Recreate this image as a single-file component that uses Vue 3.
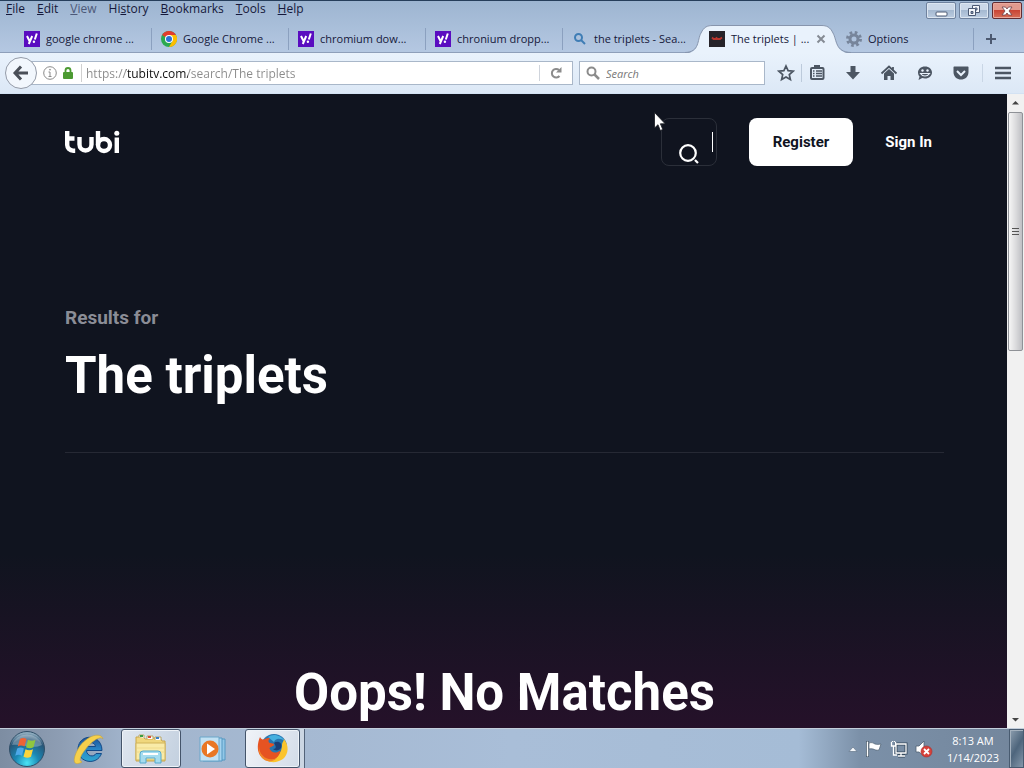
<template>
    <div class="desktop">
        <!-- Browser chrome -->
        <header class="browser">
            <div class="title-row">
                <nav class="menubar" aria-label="Menu">
                    <button v-for="item in menus" :key="item.join('')" class="menu-btn" :class="{ dim: item[1] === 'V' }">{{ item[0] }}<u>{{ item[1] }}</u>{{ item[2] }}</button>
                </nav>
                <div class="window-controls">
                    <button class="win-btn" aria-label="Minimize">
                        <svg width="28" height="16" viewBox="1 0 28 16"><rect x="10" y="9" width="11" height="4" rx="1" fill="#fff" stroke="#4c5a74" /></svg>
                    </button>
                    <button class="win-btn" aria-label="Restore">
                        <svg width="28" height="16" viewBox="1 0 28 16" fill="#f4f7fb" stroke="#4c5a74"><path d="M13.500 2.500h7v7h-7z" /><path d="M16 5h2v2h-2z" fill="#8ea3bf" /><path d="M9.500 5.500h7v7h-7z" /><path d="M12 8.500h2v2h-2z" fill="#8ea3bf" /></svg>
                    </button>
                    <button class="win-btn close" aria-label="Close">
                        <svg width="28" height="16" viewBox="1 0 28 16"><path d="M10 4h3.500L15 6l1.500-2H20l-3 4 3 4h-3.500L15 10l-1.500 2H10l3-4z" fill="#fff" stroke="#6c3f48" stroke-width=".8" /></svg>
                    </button>
                </div>
            </div>

            <div class="tabs" role="tablist">
                <div v-for="tab in tabs" :key="tab.title" class="tab" :class="{ active: tab.active, plain: tab.plain }">
                    <svg v-if="tab.active" class="tab-shape" viewBox="0 0 166 29" preserveAspectRatio="none">
                        <path d="M0 28.500C15 28 12 15 16 8C19 2 22 .5 28 .5H136C142 .5 145 2 148 8C152 15 150 28 166 28.500V29H0z" fill="#e9f2fc" />
                        <path d="M0 27.500C15 27 12 15 16 8C19 2 22 .5 28 .5H136C142 .5 145 2 148 8C152 15 150 27 166 27.500" fill="none" stroke="#8795ad" />
                    </svg>
                    <button class="tab-btn" role="tab" :aria-selected="!!tab.active">
                        <svg v-if="tab.icon === 'yahoo'" width="16" height="16" viewBox="0 0 16 16">
                            <rect width="16" height="16" fill="#5a0cc0" />
                            <path d="M3 5l2.500 5M8.200 5l-3.400 8" stroke="#fff" stroke-width="2" />
                            <path d="M12.800 2.500L10.800 8.500" stroke="#fff" stroke-width="2" />
                            <circle cx="9.900" cy="10.700" r="1.200" fill="#fff" />
                        </svg>
                        <svg v-else-if="tab.icon === 'chrome'" width="16" height="16" viewBox="0 0 16 16">
                            <circle cx="8" cy="8" r="8" fill="#2da94f" />
                            <path d="M8 8L1.100 4A8 8 0 0 1 15 4z" fill="#e33b2e" />
                            <path d="M8 4h7A8 8 0 0 1 8 16l3.500-6z" fill="#fdbd00" />
                            <circle cx="8" cy="8" r="4" fill="#fff" />
                            <circle cx="8" cy="8" r="3" fill="#2a72d8" />
                        </svg>
                        <svg v-else-if="tab.icon === 'search'" width="16" height="16" viewBox="0 0 16 16" fill="none" stroke="#3f7db5" stroke-width="2">
                            <circle cx="6.500" cy="6.500" r="3.500" /><path d="M9 9l4 4" />
                        </svg>
                        <svg v-else-if="tab.icon === 'tubi'" width="16" height="16" viewBox="0 0 16 16">
                            <rect width="16" height="16" fill="#262329" />
                            <path d="M3 6.500l1.500 1.500h2l1-1 1 1h2.500l2-1.500" fill="none" stroke="#b8342c" stroke-width="1.800" />
                        </svg>
                        <svg v-else width="16" height="16" viewBox="0 0 16 16" fill="none" stroke="#77859b">
                            <circle cx="8" cy="8" r="6.500" stroke-width="3" stroke-dasharray="2.600 2.500" />
                            <circle cx="8" cy="8" r="4" stroke-width="3" />
                        </svg>
                        <span>{{ tab.title }}</span>
                    </button>
                    <button v-if="tab.active" class="tab-close" aria-label="Close tab">
                        <svg width="10" height="10" viewBox="0 0 10 10"><path d="M1.500 1.500l7 7M8.500 1.500l-7 7" stroke="#858b94" stroke-width="2" /></svg>
                    </button>
                </div>
                <button class="new-tab" aria-label="New tab">
                    <svg width="10" height="10" viewBox="0 0 10 10"><path d="M5 0v10M0 5h10" stroke="#4c5970" stroke-width="2" /></svg>
                </button>
            </div>

            <div class="toolbar">
                <button class="back" aria-label="Back">
                    <svg width="18" height="16" viewBox="0 0 18 16" fill="none" stroke="#4a4f58" stroke-width="3"><path d="M9 1.500L3 8l6 6.500M3 8h13" /></svg>
                </button>
                <div class="url-box">
                    <svg width="14" height="14" viewBox="0 0 14 14" fill="none" stroke="#8a8a8a">
                        <circle cx="7" cy="7" r="6.300" /><path d="M7 6v4.500M5.500 6H7M5.500 10.500h3" /><circle cx="7" cy="3.700" r=".5" />
                    </svg>
                    <svg class="lock" width="10" height="12" viewBox="0 0 10 12"><path d="M2.500 6V3.500a2.500 2.500 0 0 1 5 0V6" fill="none" stroke="#4c9a32" stroke-width="1.800" /><rect y="5" width="10" height="7" rx="1" fill="#4c9a32" /></svg>
                    <input v-model="url" class="url" type="text" aria-label="Address">
                    <button class="reload" aria-label="Reload">
                        <svg width="12" height="12" viewBox="0 0 12 12"><path d="M9.500 9A4.300 4.300 0 1 1 9 3" fill="none" stroke="#8b8b8b" stroke-width="2" /><path d="M11.500 0v5.500H6z" fill="#8b8b8b" /></svg>
                    </button>
                </div>
                <label class="search-box">
                    <svg width="14" height="14" viewBox="0 0 14 14" fill="none" stroke="#8b8b8b"><circle cx="5.500" cy="5.500" r="4" stroke-width="2" /><path d="M8.500 8.500l4.500 4.500" stroke-width="2.500" /></svg>
                    <input type="text" placeholder="Search" aria-label="Search">
                </label>
                <div class="tools">
                    <button class="tool star" aria-label="Bookmark">
                        <svg width="18" height="18" viewBox="0 0 18 18"><path d="M9 2l2.100 4.700 5 .5-3.800 3.400 1.100 5L9 13l-4.400 2.600 1.100-5L1.900 7.200l5-.5z" fill="none" stroke="#4c5663" stroke-width="1.700" /></svg>
                    </button>
                    <button class="tool" aria-label="Bookmarks list">
                        <svg width="18" height="18" viewBox="0 0 18 18" fill="none" stroke="#4c5663"><rect x="3" y="4" width="12.500" height="11" rx="1" stroke-width="2" /><path d="M7 3.500V2h4v1.500" stroke-width="2" /><path d="M5 7h1.500M8 7h6M5 9.500h1.500M8 9.500h6M5 12h1.500M8 12h6" stroke-width="1.400" /></svg>
                    </button>
                    <button class="tool" aria-label="Downloads">
                        <svg width="18" height="18" viewBox="0 0 18 18" fill="#4c5663"><path d="M6.500 2h5v6H16l-7 7.500L2 8h4.500z" /></svg>
                    </button>
                    <button class="tool" aria-label="Home">
                        <svg width="18" height="18" viewBox="0 0 18 18"><path d="M1.500 9.500L9 2.500l7.500 7M13 3v3" fill="none" stroke="#4c5663" stroke-width="1.800" /><path d="M4 9.500L9 5l5 4.500V16h-3.500v-4h-3v4H4z" fill="#4c5663" /></svg>
                    </button>
                    <button class="tool" aria-label="Chat">
                        <svg width="18" height="18" viewBox="0 0 18 18"><path d="M9 2.500c4.200 0 7 2.700 7 6s-2.800 6-7 6c-1 0-2-.1-2.800-.4L2.500 16l1-3.500C2.500 11.500 2 10 2 8.500c0-3.300 2.800-6 7-6z" fill="#4c5663" /><circle cx="6.500" cy="6.500" r="1.200" fill="#e9f2fc" /><circle cx="11.500" cy="6.500" r="1.200" fill="#e9f2fc" /><path d="M4.500 9.500c2 3.300 7 3.300 9 0z" fill="none" stroke="#e9f2fc" stroke-width="1.200" /></svg>
                    </button>
                    <button class="tool" aria-label="Pocket">
                        <svg width="18" height="18" viewBox="0 0 18 18"><path d="M2.500 2.500h13c.6 0 1 .4 1 1V8c0 10-15 10-15 0V3.500c0-.6.4-1 1-1z" fill="#4c5663" /><path d="M5 7l4 4 4-4" fill="none" stroke="#e9f2fc" stroke-width="2" /></svg>
                    </button>
                    <button class="tool menu" aria-label="Open menu">
                        <svg width="18" height="18" viewBox="0 0 18 18"><path d="M1 4h16M1 9h16M1 14h16" stroke="#4c5663" stroke-width="2.600" /></svg>
                    </button>
                </div>
            </div>
        </header>

        <!-- Page and its scrollbar -->
        <div class="viewport">
            <main class="page">
                <div class="site-bar">
                    <a href="#" class="logo" aria-label="tubi">
                        <svg width="56" height="26" viewBox="1 0 56 26" fill="none" stroke="#fff" stroke-width="4.400">
                            <path d="M3.200 2v13.500a6 6 0 0 0 6 6.200h2M3 9.500h7.500" />
                            <path d="M15.500 8v7.500a6 6 0 0 0 12 0V8" />
                            <path d="M34 2v14" />
                            <circle cx="40" cy="16" r="6" />
                            <path d="M52.800 8.500v15.500" /><circle cx="52.800" cy="4.200" r="2.500" fill="#fff" stroke="none" />
                        </svg>
                    </a>
                    <label class="site-search">
                        <input type="text" aria-label="Search titles">
                        <svg width="22" height="22" viewBox="0 0 22 22" fill="none" stroke="#fff" stroke-width="2.200"><circle cx="10" cy="10" r="7.800" /><path d="M17 17l3 3" /></svg>
                        <span class="caret"></span>
                    </label>
                    <button class="register">Register</button>
                    <a href="#" class="sign-in">Sign In</a>
                </div>
                <section class="results">
                    <p>Results for</p>
                    <h1>The triplets</h1>
                </section>
                <h2 class="no-match">Oops! No Matches</h2>
            </main>
            <div class="scrollbar" aria-hidden="true">
                <svg width="17" height="17" viewBox="0 0 17 17"><path d="M5 10.500L8.500 7l3.500 3.500z" fill="#444" /></svg>
                <div class="track">
                    <div class="thumb"><i></i><i></i><i></i></div>
                </div>
                <svg width="17" height="17" viewBox="0 0 17 17"><path d="M5 7l3.500 3.500L12 7z" fill="#444" /></svg>
            </div>
        </div>

        <!-- Windows taskbar -->
        <footer class="taskbar">
            <button class="start" aria-label="Start">
                <svg width="38" height="38" viewBox="0 0 38 38">
                    <defs>
                        <radialGradient id="orb" cx=".5" cy=".9" r=".85"><stop offset="0" stop-color="#4be4f5" /><stop offset=".4" stop-color="#1a88b4" /><stop offset=".8" stop-color="#285577" /><stop offset="1" stop-color="#8caabd" /></radialGradient>
                    </defs>
                    <circle cx="19" cy="19" r="17.500" fill="url(#orb)" stroke="#304f68" />
                    <path d="M4 15a15.500 14 0 0 1 30 0c-10 5-20-2-30 0z" fill="#fff" opacity=".28" />
                    <path d="M12 9c2-1.500 4.500-1.300 6.500 0l-2 7.500c-2-1.200-4.500-1.400-6.800 0z" fill="#ee6335" />
                    <path d="M20 9.700c2.500 1.300 5 1.300 7.500 0l-2 7.600c-2.500 1.200-5 1.100-7.500-.1z" fill="#8fc63f" />
                    <path d="M9.200 18.500c2.300-1.400 4.700-1.200 6.700 0l-2 7.300c-2-1.200-4.500-1.300-6.700 0z" fill="#4da8e8" />
                    <path d="M17.500 19.200c2.500 1.300 5 1.200 7.500 0l-2 7.600c-2.500 1.200-5 1.100-7.500-.1z" fill="#fcd53b" />
                </svg>
            </button>
            <button class="task ie" aria-label="Internet Explorer">
                <svg width="34" height="34" viewBox="0 0 34 34" fill="none">
                    <defs>
                        <linearGradient id="ie" x2="0" y2="1"><stop offset="0" stop-color="#1c4f96" /><stop offset=".5" stop-color="#2a86c6" /><stop offset="1" stop-color="#2fa6cf" /></linearGradient>
                    </defs>
                    <path d="M30 18.500H14.500c.3 6 7.500 7 9.500 3h5.500C25 34 6 31 6 17.500 6 1 30 1 30 18.500zM14.500 14.500h9c-.5-5-8.500-5-9 0z" fill="url(#ie)" stroke="#134a89" />
                    <path d="M31 7C29-1 13 4 6 17c-6 11-5 18 4 13-4-1-1-7 3-12C19 10 28 3 31 7z" fill="#f6d04c" stroke="#c9a438" stroke-width=".6" />
                </svg>
            </button>
            <button class="task open" aria-label="Windows Explorer">
                <svg width="34" height="34" viewBox="0 0 34 34">
                    <path d="M2 9V5h7l2 2h8v-1h7l2 3h3v20H2z" fill="#f0d77d" stroke="#c9a64b" />
                    <path d="M5 5V3h5v3M13 7V4h6v3M21 8V5h6v3" fill="#fff" stroke="#b7a665" /><path d="M6 4h3" stroke="#3a9d43" stroke-width="2" /><path d="M14 5h3" stroke="#da4b37" stroke-width="2" /><path d="M22 6h3" stroke="#397fc7" stroke-width="2" />
                    <path d="M2 11h29v17H2z" fill="#f9eba8" stroke="#d1b45c" /><path d="M3 16h27M3 20h27" stroke="#efda8b" />
                    <path d="M6 31v-9q0-3 3-3h15q3 0 3 3v9h-6v-5h-9v5z" fill="#a5dcef" stroke="#54a9cd" /><path d="M9 22h15" stroke="#fff" stroke-width="2" />
                </svg>
            </button>
            <button class="task media" aria-label="Media Player">
                <svg width="30" height="30" viewBox="0 0 30 30"><path d="M8 5h19v21H8z" fill="#92c7e7" stroke="#5598c2" /><path d="M5 4h19v23H5z" fill="#a7d4ef" stroke="#5598c2" /><path d="M2 3h19v24H2z" fill="#c2e1f3" stroke="#6aa7ca" /><circle cx="12" cy="15" r="8.500" fill="#e97724" /><path d="M9 9.500l8 5.500-8 5.500z" fill="#fff" /></svg>
            </button>
            <button class="task open firefox" aria-label="Firefox">
                <svg width="32" height="32" viewBox="0 0 32 32">
                    <circle cx="17" cy="14" r="13" fill="#2776b0" /><path d="M11 4c5-4 13-2 17 4-6-4-10-2-11 1z" fill="#45b0df" />
                    <path d="M27 6c5 6 5 15-1 20-7 5-17 4-21-3 10 6 20 0 20-11 0-3 2-4 2-6z" fill="#fbc42d" />
                    <path d="M3 4c1 2 2 2.500 4 2.500C9 5 11 5 13 5c-2 2-2 4 0 5 2 .5 4 0 4 1.500 0 2-4 2-4.500 4 2 5 7 5 11 2C22 26 14 30 7 26-1 21 0 11 3 4z" fill="#e65322" />
                    <path d="M2 13c0 10 9 16 18 12-8 8-20 1-18-12z" fill="#f28829" />
                    <path d="M17 10c4-3 9 0 7 5-2 3-6 3-8 1 4 0 3-3 1-6z" fill="#1b3f77" />
                </svg>
            </button>
            <div class="stack-edge"></div>
            <div class="tray">
                <button aria-label="Show hidden icons"><svg width="10" height="18" viewBox="0 0 10 18"><path d="M1 11.500L5 7l4 4.500z" fill="#f5f8fb" stroke="#63768a" stroke-width=".7" /></svg></button>
                <button aria-label="Action Center"><svg width="18" height="18" viewBox="0 0 18 18"><path d="M2.500 1v16" stroke="#35495c" stroke-width="3" /><path d="M2.500 1.500v15" stroke="#fff" stroke-width="1.600" /><path d="M4 3c3-1 4 0 6 1 2 .5 3 .5 6 0l-2 6c-3 .8-4-.5-6-1-1.500-.3-2.500-.3-4 0z" fill="#fff" stroke="#4e6071" stroke-width=".7" /></svg></button>
                <button aria-label="Network"><svg width="18" height="18" viewBox="0 0 18 18" fill="none"><path d="M6 4h10v9H6zM8 16h7M11 13v3" stroke="#35495c" stroke-width="3" /><path d="M6 4h10v9H6zM8 16h7M11 13v3M1.500 2v4h4V2M3.500 6v9H7M2.500 1v1M4.500 1v1" stroke="#fff" stroke-width="1.300" /></svg></button>
                <button aria-label="Volume muted"><svg width="18" height="18" viewBox="0 0 18 18"><path d="M1 6h3l5-5v15l-5-4H1z" fill="#fff" stroke="#4e6071" stroke-width=".8" /><circle cx="11.500" cy="11.500" r="5.500" fill="#d7413a" stroke="#a82d2b" stroke-width=".6" /><path d="M9 9l5 5M14 9l-5 5" stroke="#fff" stroke-width="1.800" /></svg></button>
            </div>
            <div class="clock"><span>8:13 AM</span><span>1/14/2023</span></div>
            <button class="show-desktop" aria-label="Show desktop"></button>
        </footer>

        <svg class="pointer" width="12" height="20" viewBox="0 0 12 20"><path d="M.5.5v15.500l3.500-3.300 2.300 5.800 2.500-1-2.400-5.700h4.800z" fill="#fff" stroke="#17191f" stroke-width=".8" /></svg>
    </div>
</template>

<script setup>
import { ref } from 'vue';

const url = ref('https://tubitv.com/search/The triplets');

// Text before, on and after the underlined access key
const menus = [
    ['', 'F', 'ile'],
    ['', 'E', 'dit'],
    ['', 'V', 'iew'],
    ['Hi', 's', 'tory'],
    ['', 'B', 'ookmarks'],
    ['', 'T', 'ools'],
    ['', 'H', 'elp'],
];

const tabs = [
    { title: 'google chrome ...', icon: 'yahoo' },
    { title: 'Google Chrome ...', icon: 'chrome' },
    { title: 'chromium dow...', icon: 'yahoo' },
    { title: 'chronium dropp...', icon: 'yahoo' },
    { title: 'the triplets - Sea...', icon: 'search', plain: true },
    { title: 'The triplets | ...', icon: 'tubi', active: true },
    { title: 'Options', icon: 'gear' },
];
</script>

<style>
body {
    margin: 0;
}
</style>

<style scoped>
.desktop {
    position: relative;
    display: flex;
    flex-direction: column;
    height: 100vh;
    overflow: hidden;
    font-family: "Open Sans", "Noto Sans", sans-serif;
    font-size: 12px;
    color: #15183a;
}

.desktop * {
    box-sizing: border-box;
}

button {
    padding: 0;
    border: none;
    background: none;
    font: inherit;
    color: inherit;
}

input {
    min-width: 0;
    padding: 0;
    border: none;
    outline: none;
    background: none;
    font: inherit;
}

svg {
    display: block;
    flex: none;
}

.browser {
    flex: none;
    background: linear-gradient(#9db5d1, #b5c8e2 52px);
    border-top: 1px solid #263e5b;
}

.title-row {
    display: flex;
    justify-content: space-between;
    height: 24px;
}

.menubar {
    display: flex;
    gap: 12px;
    padding-left: 6px;
    height: 16px;
}

.menu-btn {
    line-height: 16px;
    white-space: nowrap;
}

.menu-btn.dim {
    color: #4c5878;
}

.window-controls {
    display: flex;
    gap: 3px;
    padding: 1px 2px 0 0;
}

.win-btn {
    height: 17px;
    border: 1px solid #6f829e;
    border-radius: 2px;
    background: linear-gradient(#cbd8e8 45%, #a5b9d1 50%, #bccde1);
    box-shadow: inset 0 0 0 1px #dce6f1;
}

.win-btn.close {
    border-color: #612c32;
    background: linear-gradient(#e29a8e 45%, #c94535 50%, #d66e58);
    box-shadow: inset 0 0 0 1px #e9a99d;
}

.tabs {
    display: flex;
    height: 27px;
    padding-left: 15px;
    font-size: 11px;
}

.tab {
    position: relative;
    display: flex;
    align-items: center;
    flex: 0 1 137px;
    min-width: 0;
    padding-left: 9px;
}

.tab::after {
    content: "";
    position: absolute;
    right: 0;
    top: 3px;
    bottom: 2px;
    border-right: 1px solid #8ba0bf;
}

.tab.active {
    z-index: 1;
}

.tab.active::after,
.tab.plain::after {
    display: none;
}

.tab-shape {
    position: absolute;
    left: -15px;
    top: 0;
    width: calc(100% + 29px);
    height: 29px;
}

.tab-btn {
    position: relative;
    display: flex;
    align-items: center;
    gap: 6px;
    min-width: 0;
    line-height: 16px;
    white-space: nowrap;
}

.tab-close {
    position: relative;
    margin-left: auto;
    padding-right: 11px;
}

.new-tab {
    padding-left: 12px;
}

.toolbar {
    display: flex;
    align-items: center;
    height: 42px;
    padding: 0 12px 0 5px;
    border-top: 1px solid #8e9fba;
    border-bottom: 1px solid #d3e2f3;
    background: linear-gradient(#e9f2fc, #dce8f6);
}

.back {
    z-index: 1;
    display: flex;
    align-items: center;
    justify-content: center;
    width: 32px;
    height: 32px;
    border: 1px solid #949ba8;
    border-radius: 50%;
    background: #f2f7fd;
}

.url-box {
    display: flex;
    align-items: center;
    flex: 1;
    min-width: 0;
    height: 24px;
    margin-left: -6px;
    padding-left: 11px;
    border: 1px solid #a9b7c9;
    background: #fff;
}

.lock {
    margin-left: 6px;
}

/* Only the host name of the address is black */
.url {
    flex: 1;
    height: 18px;
    margin-left: 8px;
    padding-left: 4px;
    border-left: 1px solid #d0d0d0;
    color: transparent;
    background: linear-gradient(90deg, #8a8a8a 44px, #111 44px, #111 106px, #8a8a8a 106px);
    background-clip: text;
    -webkit-background-clip: text;
    font-size: 12px;
}

.reload {
    display: flex;
    align-items: center;
    justify-content: center;
    width: 33px;
    height: 16px;
    border-left: 1px solid #cfd4dc;
}

.search-box {
    display: flex;
    align-items: center;
    gap: 6px;
    flex: 0 1 186px;
    min-width: 0;
    height: 24px;
    margin-left: 6px;
    padding-left: 6px;
    border: 1px solid #a9b7c9;
    background: #fff;
}

.search-box input {
    flex: 1;
}

.search-box input::placeholder {
    color: #777;
    font-size: 11px;
    font-style: italic;
}

.tools {
    display: flex;
    gap: 18px;
    margin-left: 12px;
}

.tool.star {
    padding-right: 6px;
    margin-right: -12px;
    border-right: 1px solid #bccadb;
}

.tool.menu {
    padding-left: 11px;
    margin-left: -6px;
    border-left: 1px solid #c9d6e5;
}

.viewport {
    display: flex;
    flex: 1;
    min-height: 0;
}

.page {
    flex: 1;
    overflow: hidden;
    padding: 24px 63px 0 65px;
    background: linear-gradient(#10141f 0, #10141f 460px, #26112a 640px);
    font-family: Roboto, "Liberation Sans", sans-serif;
    font-weight: 700;
    color: #fff;
}

.site-bar {
    display: flex;
    align-items: center;
    height: 48px;
    padding-right: 12px;
    font-size: 15px;
}

.logo {
    margin-right: auto;
}

.site-search {
    position: relative;
    width: 56px;
    height: 48px;
    border: 1px solid #2b2f39;
    border-radius: 8px;
}

.site-search input {
    width: 100%;
    height: 100%;
    color: #fff;
}

.site-search svg {
    position: absolute;
    left: 16px;
    bottom: 0;
}

.caret {
    position: absolute;
    top: 13px;
    right: 3px;
    height: 20px;
    border-left: 1px solid #fff;
}

.register {
    height: 48px;
    margin: 0 32px;
    padding: 0 24px;
    border-radius: 8px;
    background: #fff;
    color: #10141f;
}

.sign-in {
    color: #fff;
    text-decoration: none;
}

.results {
    padding: 138px 0 46px;
    border-bottom: 1px solid #262934;
}

.results p {
    margin: 0;
    font-size: 19px;
    line-height: 28px;
    color: #8b8d96;
}

.results h1 {
    margin: 14px 0 0;
    font-size: 51px;
    line-height: 60px;
}

.no-match {
    margin: 210px 0 0;
    font-size: 51px;
    line-height: 60px;
    text-align: center;
}

.scrollbar {
    display: flex;
    flex-direction: column;
    flex: none;
    width: 17px;
    background: #f1f1f1;
}

.track {
    flex: 1;
    padding: 1px;
}

.thumb {
    display: flex;
    flex-direction: column;
    align-items: center;
    justify-content: center;
    gap: 2px;
    height: 40%;
    border: 1px solid #8f9297;
    border-radius: 2px;
    background: linear-gradient(90deg, #f6f6f6, #dcdcde 50%, #bfc0c4);
}

.thumb i {
    width: 7px;
    height: 1px;
    background: #555;
}

.taskbar {
    display: flex;
    flex: none;
    height: 40px;
    border-top: 1px solid #c3cedb;
    background: linear-gradient(90deg, #7d8da2 0, #8d9db3 60px, #a2b5cd 130px, #a9bed8 50%, #a5bcd6 78%, #7b90a8 84%, #73869c);
}

.start {
    padding-left: 8px;
}

.task {
    display: flex;
    align-items: center;
    justify-content: center;
    width: 60px;
}

.task.ie {
    margin: 0 2px 0 13px;
}

.task.open {
    border: 1px solid #44546a;
    border-radius: 3px;
    background: linear-gradient(110deg, #dfe6ef, #c3d0df);
    box-shadow: inset 0 0 0 1px #eef3f8;
}

.task.media {
    margin: 0 2px;
}

.task.firefox {
    width: 55px;
    background: linear-gradient(110deg, #f0f3f8, #d3dce8);
}

.stack-edge {
    width: 5px;
    border-right: 1px solid #536379;
    background: #cbd6e3;
}

.tray {
    display: flex;
    align-items: center;
    gap: 7px;
    margin-left: auto;
}

.clock {
    display: flex;
    flex-direction: column;
    align-items: center;
    margin: 3px 10px 0 14px;
    font-size: 11px;
    line-height: 17px;
    color: #fff;
}

.show-desktop {
    width: 15px;
    border: 1px solid #485b70;
    background: linear-gradient(120deg, #8d9eaf, #4e657c 50%, #8497aa);
    box-shadow: inset 1px 1px #a4b1be;
}

.pointer {
    position: absolute;
    left: 654px;
    top: 112px;
    z-index: 5;
}
</style>
